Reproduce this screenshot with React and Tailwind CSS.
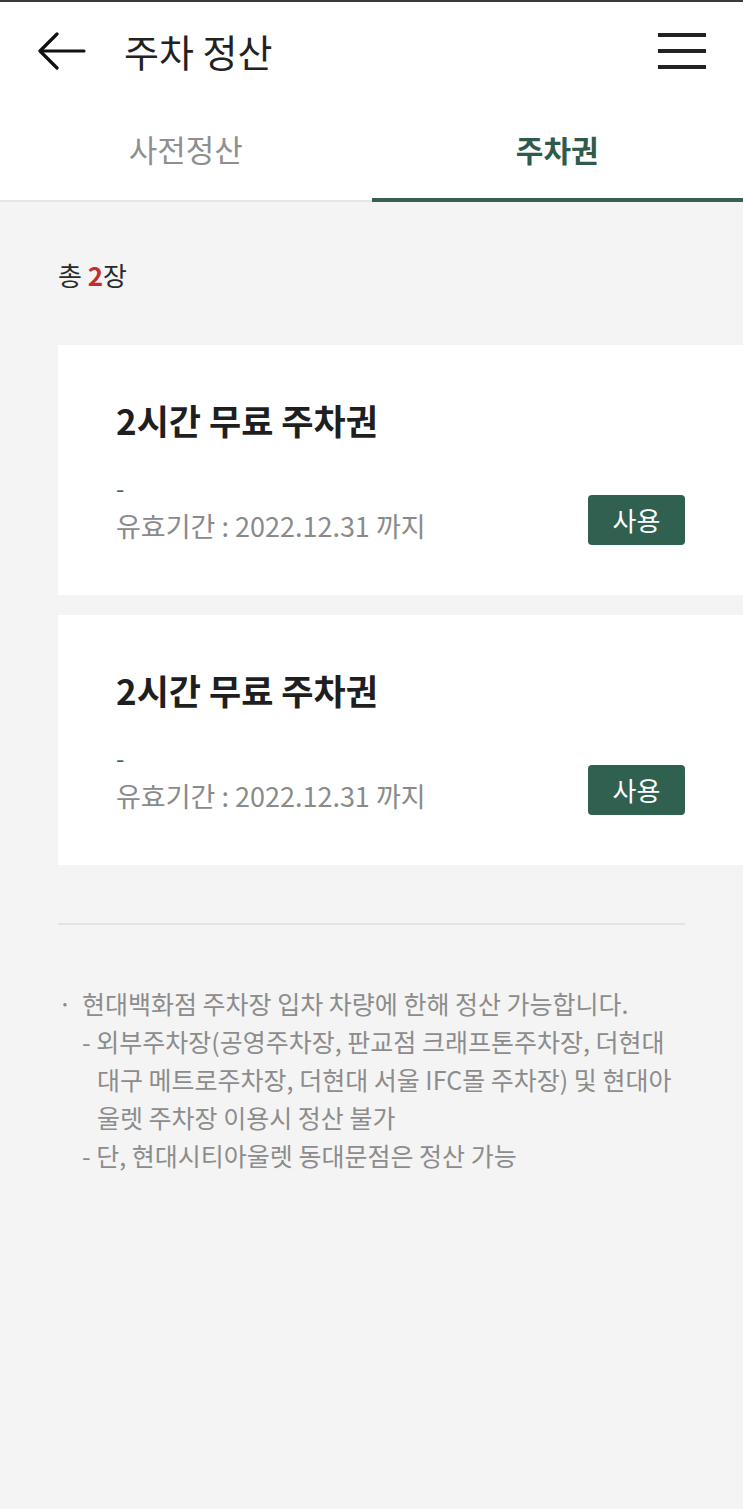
const font = { fontFamily: '"Noto Sans CJK KR", "Noto Sans", sans-serif' };

function Ticket() {
  return (
    <div className="bg-white h-[250px] pl-[58px] pr-[58px] pt-[55px]">
      <div className="text-[35px] leading-[40px] font-bold text-[#1f1f1f]">2시간 무료 주차권</div>
      <div className="flex items-end justify-between mt-[29px]">
        <div>
          <div className="text-[24px] leading-[38px] text-[#3b6b5d]">-</div>
          <div className="text-[27px] leading-[38px] text-[#8a8a8a]">유효기간 : 2022.12.31 까지</div>
        </div>
        <button className="w-[97px] h-[50px] rounded-[4px] bg-[#30604f] text-white text-[26px] leading-none">사용</button>
      </div>
    </div>
  );
}

export default function App() {
  return (
    <div className="min-h-[1509px] bg-[#f4f4f4] border-t-2 border-[#3a3a3a]" style={font}>
      {/* 헤더 */}
      <div className="bg-white h-[98px] flex items-center justify-between pl-[38px] pr-[38px]">
        <div className="flex items-center">
          <svg width="48" height="40" viewBox="0 0 48 40" fill="none" stroke="#111" strokeWidth="3.2" strokeLinecap="round" strokeLinejoin="round">
            <path d="M46 20H3" />
            <path d="M19 3L2 20L19 37" />
          </svg>
          <span className="ml-[38px] text-[38px] leading-none text-[#222]">주차 정산</span>
        </div>
        <div className="flex flex-col gap-[12.5px] w-[48px] mr-[-0.5px]">
          <div className="h-[3.5px] bg-[#222]" />
          <div className="h-[3.5px] bg-[#222]" />
          <div className="h-[3.5px] bg-[#222]" />
        </div>
      </div>

      {/* 탭 */}
      <div className="bg-white flex h-[102px]">
        <div className="flex-1 flex items-center justify-center border-b-2 border-[#e6e6e6] pb-[2px]">
          <span className="text-[31px] text-[#8f8f8f]">사전정산</span>
        </div>
        <div className="flex-1 flex items-center justify-center border-b-4 border-[#3a5e51]">
          <span className="text-[30px] font-bold text-[#2f5a4c]">주차권</span>
        </div>
      </div>

      {/* 목록 */}
      <div className="pl-[58px]">
        <div className="pt-[56px] text-[26px] leading-[34px] text-[#2a2a2a]">
          총 <span className="font-bold text-[#c62e2e]">2</span>장
        </div>
        <div className="mt-[53px] flex flex-col gap-[20px]">
          <Ticket />
          <Ticket />
        </div>
        <div className="mr-[58px] mt-[58px] h-[2px] bg-[#e3e3e3]" />

        <div className="mt-[59px] text-[25px] leading-[38px] text-[#8c8c8c]">
          <div className="flex">
            <span className="w-[24px] shrink-0">·</span>
            <span>현대백화점 주차장 입차 차량에 한해 정산 가능합니다.</span>
          </div>
          <div className="pl-[24px]">
            <div>- 외부주차장(공영주차장, 판교점 크래프톤주차장, 더현대</div>
            <div className="pl-[15px]">대구 메트로주차장, 더현대 서울 IFC몰 주차장) 및 현대아</div>
            <div className="pl-[15px]">울렛 주차장 이용시 정산 불가</div>
            <div>- 단, 현대시티아울렛 동대문점은 정산 가능</div>
          </div>
        </div>
      </div>
    </div>
  );
}
